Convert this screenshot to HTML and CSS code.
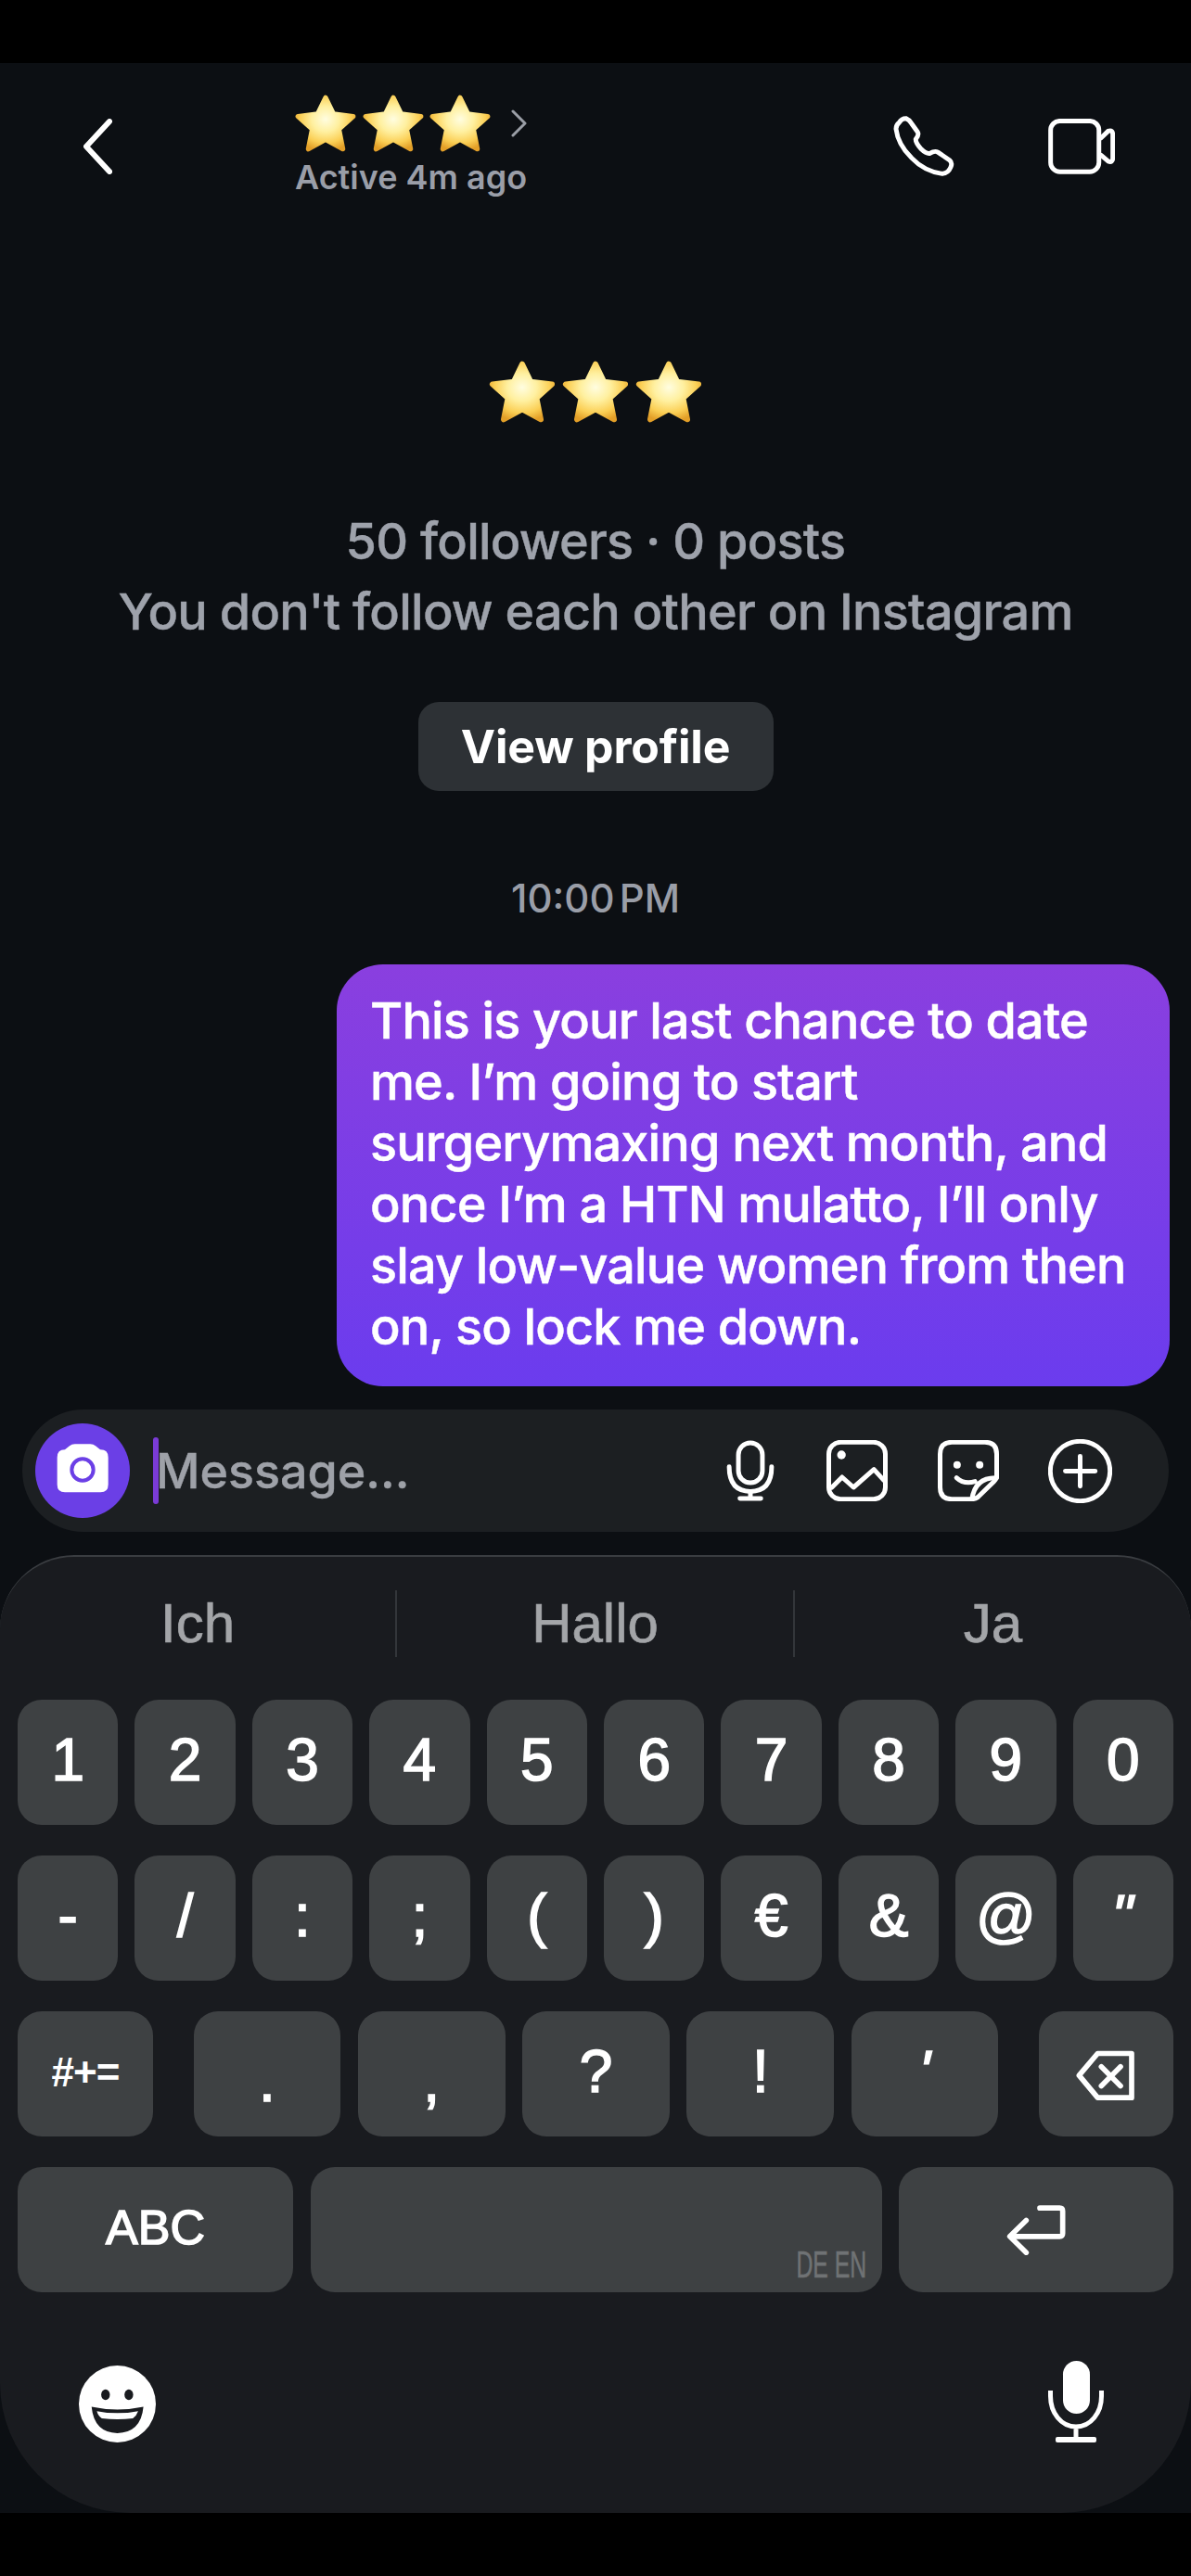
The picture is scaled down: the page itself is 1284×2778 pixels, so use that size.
FILE: index.html
```html
<!DOCTYPE html>
<html lang="en">
<head>
    <meta charset="UTF-8">
    <title>Chat</title>
    <link rel="stylesheet" href="styles.css">
</head>
<body>
<svg class="defs">
    <defs>
        <radialGradient id="starFill" cx="50%" cy="42%" r="62%">
            <stop offset="0" stop-color="#fffde0"/>
            <stop offset="0.4" stop-color="#fff0a0"/>
            <stop offset="0.75" stop-color="#fbcf55"/>
            <stop offset="1" stop-color="#e39f28"/>
        </radialGradient>
        <symbol id="star" viewBox="0 0 64 60">
            <polygon points="32,4 40,20.5 60,23 45.5,36 49.5,56 32,46.5 14.5,56 18.5,36 4,23 24,20.5" fill="url(#starFill)" stroke="url(#starFill)" stroke-width="5" stroke-linejoin="round"/>
        </symbol>
    </defs>
</svg>
<div class="screen">
    <div class="header">
        <svg class="back" viewBox="0 0 31 60"><polyline points="28,3 3,30 28,57"/></svg>
        <div class="title">
            <div class="title-stars">
                <svg class="star"><use href="#star"/></svg>
                <svg class="star"><use href="#star"/></svg>
                <svg class="star"><use href="#star"/></svg>
                <svg class="more" viewBox="0 0 17 30"><polyline points="2,2 15,15 2,28"/></svg>
            </div>
            <div class="active">Active 4m ago</div>
        </div>
        <div class="header-icons">
            <svg class="phone" viewBox="70 70 200 196"><path d="M88 92 Q96 78 110 78 Q120 82 128 94 L148 122 Q154 132 142 146 Q142 158 160 178 Q176 194 188 192 Q204 182 214 188 L252 214 Q262 222 256 236 Q248 256 228 258 Q170 250 128 206 Q84 162 78 112 Q78 100 88 92 Z"/></svg>
            <svg class="video" viewBox="565 78 217 180"><rect x="573" y="85" width="157" height="165" rx="30"/><path d="M737 140 L760 118 Q775 112 775 130 V205 Q775 222 760 216 L737 196"/></svg>
        </div>
    </div>

    <div class="profile">
        <div class="profile-stars">
            <svg class="star-big"><use href="#star"/></svg>
            <svg class="star-big"><use href="#star"/></svg>
            <svg class="star-big"><use href="#star"/></svg>
        </div>
        <div class="stats">50 followers · 0 posts<br>You don't follow each other on Instagram</div>
        <div class="view-btn">View profile</div>
        <div class="time">10:00 PM</div>
    </div>

    <div class="bubble">This is your last chance to date<br>me. I’m going to start<br>surgerymaxing next month, and<br>once I’m a HTN mulatto, I’ll only<br>slay low-value women from then<br>on, so lock me down.</div>

    <div class="composer">
        <div class="cam">
            <svg viewBox="54 45 306 306">
                <path class="cam-body" d="M150 130 L165 118 Q172 112 182 112 H232 Q242 112 249 118 L264 130 H265 Q290 130 290 155 V243 Q290 268 265 268 H150 Q125 268 125 243 V155 Q125 130 150 130 Z"/>
                <circle class="cam-lens" cx="207" cy="195" r="35"/>
            </svg>
        </div>
        <div class="caret"></div>
        <div class="placeholder">Message...</div>
        <div class="composer-icons">
            <svg class="ic-mic" viewBox="130 125 165 208"><rect x="172" y="137" width="78" height="130" rx="39"/><path d="M142 215 Q142 295 211 295 Q280 295 280 215"/><path d="M211 295 V318 M177 318 H245"/></svg>
            <svg class="ic-pic" viewBox="455 130 197 198"><rect x="462" y="137" width="183" height="184" rx="38"/><circle class="dot" cx="503" cy="178" r="14"/><path d="M472 283 L505 250 L542 283 L608 225 L640 260"/></svg>
            <svg class="ic-sticker" viewBox="815 130 197 198"><path d="M925 321 H860 Q822 321 822 283 V175 Q822 137 860 137 H967 Q1005 137 1005 175 V250 Q1002 258 996 264 L945 314 Q935 321 925 321 Z"/><path d="M1005 252 Q935 250 925 321"/><path d="M875 252 Q900 275 935 264"/><circle class="dot" cx="877" cy="210" r="12"/><circle class="dot" cx="950" cy="210" r="12"/></svg>
            <svg class="ic-plus" viewBox="1170 124 208 208"><circle cx="1274" cy="228" r="97"/><path d="M1226 228 H1323 M1274 180 V277"/></svg>
        </div>
    </div>

    <div class="keyboard">
        <div class="suggest">
            <div class="sug">Ich</div>
            <div class="sug">Hallo</div>
            <div class="sug">Ja</div>
        </div>
        <div class="rows">
            <div class="row-ten">
                <div class="key">1</div><div class="key">2</div><div class="key">3</div><div class="key">4</div><div class="key">5</div>
                <div class="key">6</div><div class="key">7</div><div class="key">8</div><div class="key">9</div><div class="key">0</div>
            </div>
            <div class="row-ten">
                <div class="key">-</div><div class="key">/</div><div class="key">:</div><div class="key">;</div><div class="key">(</div>
                <div class="key">)</div><div class="key">€</div><div class="key">&amp;</div><div class="key">@</div><div class="key"><span class="slant">"</span></div>
            </div>
            <div class="row-mid">
                <div class="key key-sym">#+=</div>
                <div class="key key-low">.</div>
                <div class="key key-low">,</div>
                <div class="key">?</div>
                <div class="key">!</div>
                <div class="key"><span class="slant">'</span></div>
                <div class="key key-del">
                    <svg class="ic-del" viewBox="300 62 192 164"><path d="M370 72 H480 V215 H370 L310 143 Z"/><path d="M382 115 L444 177 M444 115 L382 177"/></svg>
                </div>
            </div>
            <div class="row-last">
                <div class="key key-abc">ABC</div>
                <div class="key key-space"><span class="lang">DE EN</span></div>
                <div class="key key-enter">
                    <svg class="ic-enter" viewBox="74 558 192 164"><path d="M182 570 H246 Q256 570 256 580 V652 Q256 662 246 662 H88"/><path d="M138 610 L85 662 L138 714"/></svg>
                </div>
            </div>
        </div>
        <div class="kb-bottom">
            <svg class="ic-emoji" viewBox="76 64 248 248">
                <circle cx="200" cy="188" r="124" fill="#fff"/>
                <ellipse cx="162" cy="158" rx="14" ry="17" fill="#191b1f"/>
                <ellipse cx="237" cy="158" rx="14" ry="17" fill="#191b1f"/>
                <path d="M117 197 Q200 215 284 197 Q276 280 200 282 Q125 280 117 197 Z" fill="#191b1f"/>
                <path d="M134 211 Q200 224 267 211 Q262 226 250 234 Q200 240 150 234 Q138 226 134 211 Z" fill="#fff"/>
            </svg>
            <svg class="ic-dictate" viewBox="0 0 60 88">
                <rect x="16" y="0" width="29" height="57" rx="14.5" fill="#fff"/>
                <path d="M2.5 32 V38 C2.5 56 14 71 30 71 C46 71 57.5 56 57.5 38 V32 M30 71 V84" fill="none" stroke="#fff" stroke-width="5"/>
                <rect x="8" y="82" width="44" height="6" rx="2" fill="#fff"/>
            </svg>
        </div>
    </div>
</div>
</body>
</html>
```

FILE: styles.css
```css
html,body{margin:0;padding:0;background:#000;}
body{font-family:Inter,"Liberation Sans",sans-serif;}
.defs{display:block;width:0;height:0;}
.screen{margin:68px 0;height:2642px;background:#0c0f13;display:flex;flex-direction:column;overflow:hidden;}

/* header */
.header{display:flex;align-items:center;padding:35px 82px 0 90px;}
.back{width:31px;height:60px;fill:none;stroke:#fff;stroke-width:6;stroke-linecap:round;stroke-linejoin:round;}
.title{margin-left:197px;}
.title-stars{display:flex;align-items:center;gap:12.5px;height:60px;margin-left:-1px;}
.star{width:68px;height:64px;margin-right:-8px;}
.more{width:17px;height:30px;margin-left:16px;fill:none;stroke:#9a9ea6;stroke-width:3;stroke-linecap:round;stroke-linejoin:round;}
.active{margin-top:7px;font-size:36px;line-height:42px;font-weight:600;color:#9a9ea8;white-space:nowrap;}
.header-icons{margin-left:auto;display:flex;align-items:center;gap:100px;}
.phone{width:67px;height:65px;fill:none;stroke:#fff;stroke-width:15;stroke-linejoin:round;}
.video{width:72px;height:60px;fill:none;stroke:#fff;stroke-width:15;stroke-linejoin:round;stroke-linecap:round;}

/* profile block */
.profile{display:flex;flex-direction:column;align-items:center;margin-top:177px;}
.profile-stars{display:flex;align-items:center;gap:5px;height:66px;}
.star-big{width:74px;height:69px;}
.stats{margin-top:91px;font-size:54px;letter-spacing:-.75px;line-height:76px;text-align:center;font-weight:500;color:#9ea2ab;-webkit-text-stroke:.4px #9ea2ab;white-space:nowrap;}
.view-btn{margin-top:59px;width:383px;height:96px;border-radius:22px;background:#2d3135;color:#fff;font-size:50px;letter-spacing:-.2px;font-weight:700;display:flex;align-items:center;justify-content:center;}
.time{margin-top:91px;font-size:42px;word-spacing:-6px;line-height:50px;color:#9a9ea8;font-weight:500;}

/* bubble */
.bubble{align-self:flex-end;width:826px;margin:46px 23px 0 0;padding:28px 36px 31px;border-radius:50px;background:linear-gradient(180deg,#8a3fdf 0%,#6b3cee 100%);color:#fff;font-size:54px;letter-spacing:-.85px;line-height:66px;font-weight:500;-webkit-text-stroke:.5px #fff;white-space:nowrap;}

/* message input */
.composer{display:flex;align-items:center;height:132px;margin:25px 24px 0;padding:0 61px 0 14px;border-radius:66px;background:#1c1f22;}
.cam{width:102px;height:102px;border-radius:51px;background:#6b3fe6;}
.cam svg{display:block;width:102px;height:102px;}
.cam-body{fill:#fff;}
.cam-lens{fill:#fff;stroke:#6b3fe6;stroke-width:12;}
.caret{width:6px;height:72px;margin-left:25px;border-radius:3px;background:#7a3bd6;}
.placeholder{font-size:52px;font-weight:500;color:#9ea1a8;margin-left:-3px;-webkit-text-stroke:.4px #9ea1a8;}
.composer-icons{margin-left:auto;display:flex;align-items:center;}
.composer-icons svg{fill:none;stroke:#fff;stroke-width:15;stroke-linecap:round;stroke-linejoin:round;}
.composer-icons .dot{fill:#fff;stroke:none;}
.ic-mic{width:55px;height:69px;}
.ic-pic{width:66px;height:66px;margin-left:54px;}
.ic-sticker{width:66px;height:66px;margin-left:54px;}
.ic-plus{width:69px;height:69px;margin-left:53px;}

/* keyboard */
.keyboard{margin-top:25px;flex:1;background:#191b1f;border-top:2px solid #3a3d41;border-radius:80px 80px 140px 140px;font-family:"Liberation Sans",Arial,sans-serif;color:#fff;}
.suggest{display:grid;grid-template-columns:426px 429px 429px;margin-top:36px;}
.sug{height:72px;font-size:60px;line-height:72px;text-align:center;color:#a3a5a8;-webkit-text-stroke:.7px #a3a5a8;}
.sug+.sug{border-left:2px solid #33363a;}
.rows{display:flex;flex-direction:column;gap:33px;margin-top:46px;padding:0 19px;}
.row-ten{display:grid;grid-template-columns:repeat(10,1fr);gap:18px;}
.row-mid,.row-last{display:flex;gap:18.5px;}
.key{flex:1;height:135px;padding-bottom:6px;box-sizing:border-box;border-radius:26px;background:#3e4143;display:flex;align-items:center;justify-content:center;font-size:64px;line-height:1;-webkit-text-stroke:1.6px #fff;}
.slant{display:inline-block;transform:skewX(-12deg);}
.key-low{padding-top:14px;padding-bottom:0;}
.key-sym{flex:0 0 146px;margin-right:25px;font-size:44px;font-weight:700;letter-spacing:-1px;-webkit-text-stroke:0;padding-bottom:4px;}
.key-del{flex:0 0 145px;margin-left:25px;padding-bottom:0;}
.key-abc{flex:0 0 297px;font-size:52px;}
.key-enter{flex:0 0 296px;padding-bottom:0;}
.key-space{justify-content:flex-end;align-items:flex-end;padding:0 16px 10px 0;}
.lang{display:inline-block;font-size:40px;color:#6f7274;-webkit-text-stroke:.6px #6f7274;transform:scaleX(.62);transform-origin:right bottom;}
.ic-del,.ic-enter{width:64px;height:55px;fill:none;stroke:#fff;stroke-width:17;stroke-linecap:round;stroke-linejoin:round;}
.ic-del{margin-top:4px;}
.kb-bottom{display:flex;justify-content:space-between;align-items:flex-end;margin-top:74px;padding:0 94px 0 85px;}
.ic-emoji{width:83px;height:83px;}
.ic-dictate{width:60px;height:88px;}
```
